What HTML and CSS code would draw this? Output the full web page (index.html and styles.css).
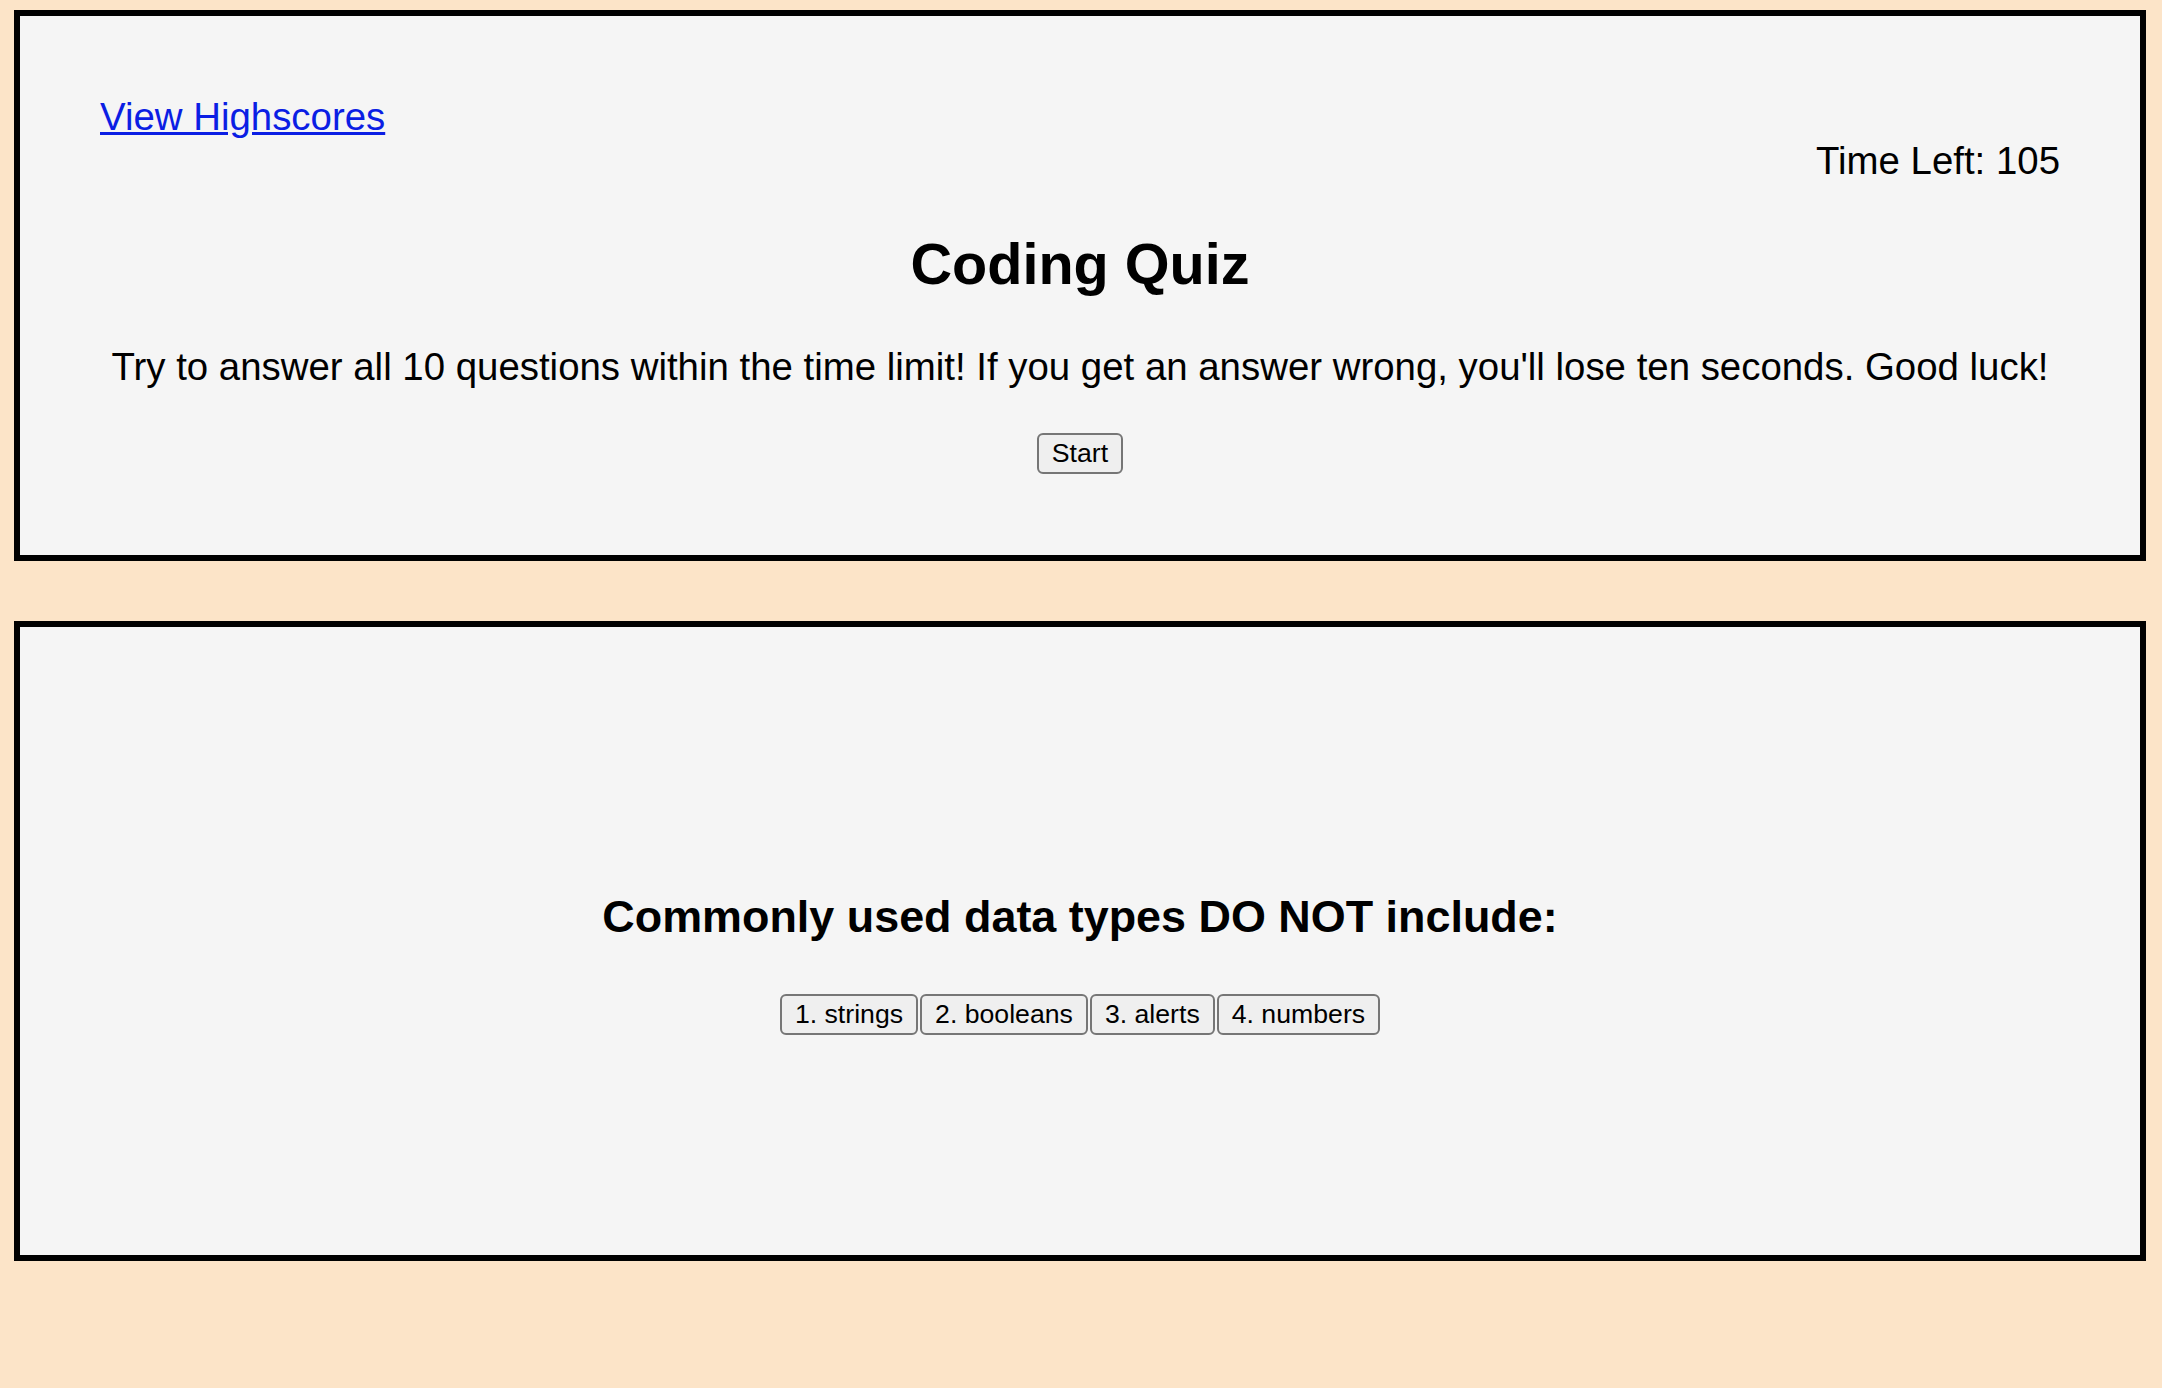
FILE: index.html
```html
<!DOCTYPE html>
<html lang="en">
<head>
<meta charset="utf-8">
<title>Coding Quiz</title>
<link rel="stylesheet" href="styles.css">
</head>
<body>
  <main class="page">
    <section class="card card-intro">
      <div class="nav-row"><a class="highscores" href="#">View Highscores</a></div>
      <div class="timer">Time Left: 105</div>
      <h2 class="title">Coding Quiz</h2>
      <p class="intro">Try to answer all 10 questions within the time limit! If you get an answer wrong, you'll lose ten seconds. Good luck!</p>
      <div class="actions"><button class="btn">Start</button></div>
    </section>
    <section class="card card-question">
      <h3 class="question">Commonly used data types DO NOT include:</h3>
      <div class="answers"><button class="btn btn-answer">1. strings</button><button class="btn btn-answer">2. booleans</button><button class="btn btn-answer">3. alerts</button><button class="btn btn-answer">4. numbers</button></div>
    </section>
  </main>
</body>
</html>
```
FILE: styles.css
```css
html, body {
  margin: 0;
  padding: 0;
}

body {
  background: #fce4c8;
  font-family: "Liberation Sans", Arial, Helvetica, sans-serif;
  font-size: 38.4px;
  color: #000;
  min-height: 1388px;
}

.page {
  padding: 10px 16px 0 14px;
}

.card {
  background: #f5f5f5;
  border: 6px solid #000;
  padding: 79px 80px 81px;
}

.card-intro {
  margin-bottom: 60px;
}

.nav-row {
  text-align: left;
}

.highscores {
  color: #0b1ee4;
  text-decoration: underline;
}

.timer {
  text-align: right;
}

.title {
  font-size: 57.6px;
  font-weight: bold;
  text-align: center;
  margin: 47.8px 0;
}

.intro {
  text-align: center;
  margin: 38.4px 0;
}

.actions {
  text-align: center;
}

.btn {
  font-family: "Liberation Sans", Arial, Helvetica, sans-serif;
  font-size: 26.67px;
  color: #000;
  background: #efefef;
  border: 2px solid #767676;
  border-radius: 6px;
  padding: 3px 13px;
  margin: 0;
}

.card-question {
  box-sizing: border-box;
  height: 640px;
  padding: 0 80px;
  display: flex;
  flex-direction: column;
  justify-content: center;
}

.question {
  font-size: 44.9px;
  font-weight: bold;
  text-align: center;
  margin: 44.9px 0;
}

.answers {
  text-align: center;
}

.btn-answer {
  padding: 3px 13px;
  margin: 0 1px;
}
```
